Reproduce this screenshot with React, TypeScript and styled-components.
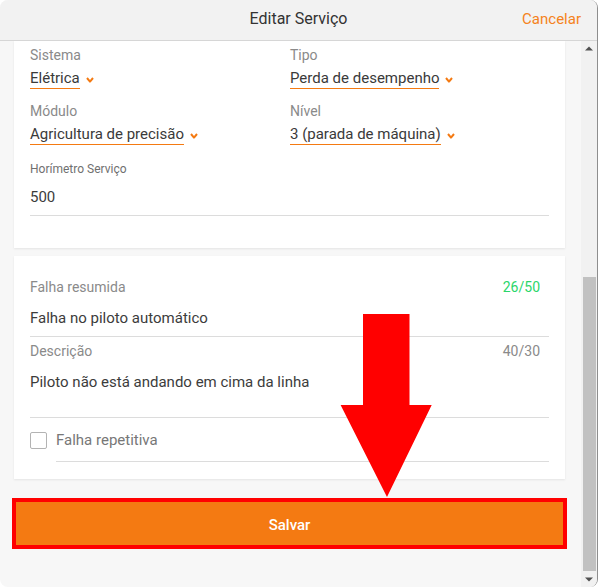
import styled, { createGlobalStyle } from "styled-components";

const GlobalStyle = createGlobalStyle`
  html, body {
    margin: 0;
    padding: 0;
    background: #ffffff;
    font-family: Roboto, "Liberation Sans", sans-serif;
  }
  * {
    box-sizing: border-box;
  }
`;

const ORANGE = "#f47a12";

const Modal = styled.div`
  position: relative;
  width: 598px;
  height: 587px;
  display: flex;
  flex-direction: column;
  background: #f7f7f7;
  border-right: 1px solid #8e8e8e;
  border-radius: 8px;
  overflow: hidden;
`;

const Header = styled.header`
  flex: none;
  height: 41px;
  display: grid;
  grid-template-columns: 1fr auto 1fr;
  align-items: center;
  padding: 0 16px 3px;
  background: #f2f2f2;
  border-bottom: 1px solid #d6d6d6;
`;

const Title = styled.h1`
  grid-column: 2;
  margin: 0;
  font-size: 16px;
  font-weight: 400;
  color: #333333;
`;

const CancelButton = styled.button`
  justify-self: end;
  border: 0;
  padding: 0;
  background: none;
  font-family: inherit;
  font-size: 15px;
  color: #f58220;
  cursor: pointer;
`;

const Body = styled.div`
  flex: 1;
  display: flex;
  min-height: 0;
`;

const ScrollView = styled.div`
  flex: 1;
  overflow: hidden;
  padding: 0 16px 0 14px;
  display: flex;
  flex-direction: column;
`;

const Card = styled.section<{ $pad: string; $gap?: number }>`
  background: #ffffff;
  padding: ${(p) => p.$pad};
  margin-top: ${(p) => p.$gap ?? 0}px;
  box-shadow: 0 1px 2px rgba(0, 0, 0, 0.08);
`;

const FieldGrid = styled.div`
  display: grid;
  grid-template-columns: 260px 1fr;
  row-gap: 13px;
`;

const Label = styled.div<{ $small?: boolean }>`
  font-size: ${(p) => (p.$small ? 12 : 14)}px;
  line-height: ${(p) => (p.$small ? 16 : 18)}px;
  color: ${(p) => (p.$small ? "#707070" : "#8a8a8a")};
`;

const SelectRow = styled.div`
  display: flex;
  align-items: center;
  gap: 6px;
  margin-top: 3px;
`;

const SelectValue = styled.span`
  padding-top: 1px;
  font-size: 15px;
  line-height: 20px;
  color: #3a3a3a;
  border-bottom: 1px solid ${ORANGE};
`;

const Chevron = styled.svg`
  width: 8px;
  height: 6px;
  margin-top: 4px;
`;

const Block = styled.div<{ $gap: number }>`
  margin-top: ${(p) => p.$gap}px;
`;

const Value = styled.div<{ $gap: number; $bottom: number }>`
  margin-top: ${(p) => p.$gap}px;
  padding-bottom: ${(p) => p.$bottom}px;
  font-size: 15px;
  line-height: 21px;
  color: #3c3c3c;
  border-bottom: 1px solid #dcdcdc;
`;

const LabelRow = styled.div`
  display: flex;
  justify-content: space-between;
  align-items: center;
`;

const Counter = styled.span<{ $ok?: boolean }>`
  padding-right: 9px;
  font-size: 14px;
  line-height: 18px;
  color: ${(p) => (p.$ok ? "#2bd66a" : "#8a8a8a")};
`;

const CheckRow = styled.label`
  display: flex;
  align-items: flex-start;
  gap: 9px;
  margin-top: 12px;
  cursor: pointer;
`;

const CheckBox = styled.span`
  flex: none;
  width: 17px;
  height: 17px;
  margin-top: 1.5px;
  border: 1.5px solid #b3b3b3;
  border-radius: 2px;
`;

const CheckLabel = styled.span`
  flex: 1;
  padding: 1px 0 12px;
  font-size: 15px;
  line-height: 18px;
  color: #777777;
  border-bottom: 1px solid #dcdcdc;
`;

const Highlight = styled.div`
  margin: 19px -2px 0;
  border: 4.5px solid #ff0000;
`;

const SaveButton = styled.button`
  display: block;
  width: 100%;
  height: 43px;
  padding: 3px 0 0;
  border: 0;
  background: ${ORANGE};
  color: #ffffff;
  font-family: inherit;
  font-size: 15px;
  font-weight: 500;
  cursor: pointer;
`;

const Scrollbar = styled.div`
  flex: none;
  width: 16px;
  display: flex;
  flex-direction: column;
  background: #f1f1f1;
`;

const ScrollButton = styled.div`
  flex: none;
  height: 15px;
  display: flex;
  align-items: center;
  justify-content: center;
`;

const Thumb = styled.div<{ $top: number }>`
  flex: 1;
  margin: ${(p) => p.$top}px 1px 1px 2px;
  background: #c1c1c1;
`;

const Overlay = styled.svg`
  position: absolute;
  left: 0;
  top: 0;
  width: 598px;
  height: 587px;
  pointer-events: none;
`;

const Arrow = ({ down }: { down?: boolean }) => (
  <svg width="8" height="5" viewBox="0 0 8 5">
    <polygon
      points={down ? "0,0.5 8,0.5 4,4.5" : "0,4.5 8,4.5 4,0.5"}
      fill="#505050"
    />
  </svg>
);

const Select = ({ label, value }: { label: string; value: string }) => (
  <div>
    <Label>{label}</Label>
    <SelectRow>
      <SelectValue>{value}</SelectValue>
      <Chevron viewBox="0 0 8 6">
        <path
          d="M1 1 L4 4.6 L7 1"
          fill="none"
          stroke={ORANGE}
          strokeWidth="2"
          strokeLinejoin="round"
        />
      </Chevron>
    </SelectRow>
  </div>
);

export default function App() {
  return (
    <>
      <GlobalStyle />
      <Modal>
        <Header>
          <Title>Editar Serviço</Title>
          <CancelButton>Cancelar</CancelButton>
        </Header>
        <Body>
          <ScrollView>
            <Card $pad="5px 16px 32px">
              <FieldGrid>
                <Select label="Sistema" value="Elétrica" />
                <Select label="Tipo" value="Perda de desempenho" />
                <Select label="Módulo" value="Agricultura de precisão" />
                <Select label="Nível" value="3 (parada de máquina)" />
              </FieldGrid>
              <Block $gap={16}>
                <Label $small>Horímetro Serviço</Label>
                <Value $gap={10} $bottom={7}>
                  500
                </Value>
              </Block>
            </Card>

            <Card $pad="22px 16px 17px" $gap={8}>
              <LabelRow>
                <Label>Falha resumida</Label>
                <Counter $ok>26/50</Counter>
              </LabelRow>
              <Value $gap={11.5} $bottom={7}>
                Falha no piloto automático
              </Value>
              <Block $gap={5}>
                <LabelRow>
                  <Label>Descrição</Label>
                  <Counter>40/30</Counter>
                </LabelRow>
                <Value $gap={12.5} $bottom={24}>
                  Piloto não está andando em cima da linha
                </Value>
              </Block>
              <CheckRow>
                <CheckBox />
                <CheckLabel>Falha repetitiva</CheckLabel>
              </CheckRow>
            </Card>

            <Highlight>
              <SaveButton>Salvar</SaveButton>
            </Highlight>
          </ScrollView>
          <Scrollbar>
            <ScrollButton>
              <Arrow />
            </ScrollButton>
            <Thumb $top={221} />
            <ScrollButton>
              <Arrow down />
            </ScrollButton>
          </Scrollbar>
        </Body>
        <Overlay viewBox="0 0 598 587">
          <polygon
            points="363,314 409.5,314 409.5,405 431.7,405 387,497 340.6,405 363,405"
            fill="#ff0000"
          />
        </Overlay>
      </Modal>
    </>
  );
}
